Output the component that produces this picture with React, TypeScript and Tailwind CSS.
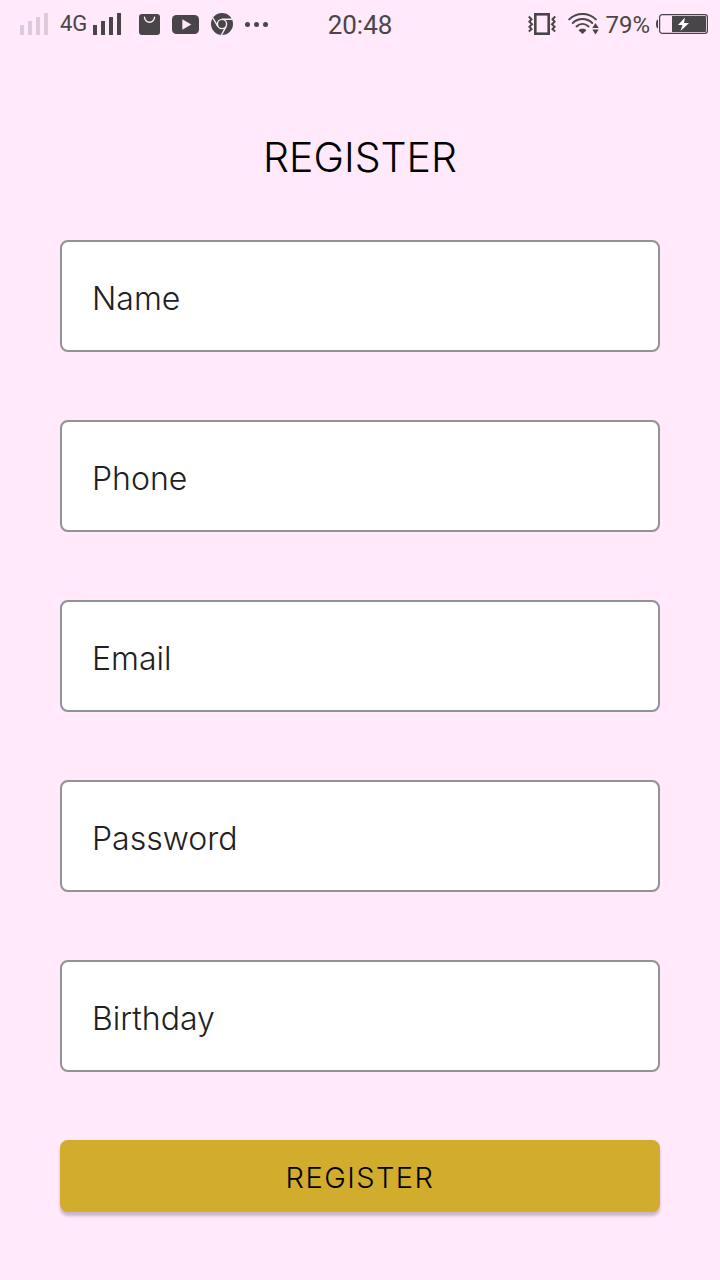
import React from "react";

type Field = { id: string; label: string; type: string };

const fields: Field[] = [
  { id: "name", label: "Name", type: "text" },
  { id: "phone", label: "Phone", type: "tel" },
  { id: "email", label: "Email", type: "email" },
  { id: "password", label: "Password", type: "password" },
  { id: "birthday", label: "Birthday", type: "text" },
];

function Signal({ className }: { className: string }) {
  return (
    <svg width="28" height="22" viewBox="0 0 28 22" fill="currentColor" className={className} aria-hidden="true">
      <path d="M0 12h4v10H0zM8 8h4v14H8zM16 4h4v18h-4zM24 0h4v22h-4z" />
    </svg>
  );
}

function BagIcon() {
  return (
    <svg width="21" height="21" viewBox="0 0 21 21" aria-hidden="true">
      <rect width="21" height="21" rx="3" fill="currentColor" />
      <path d="M5.5 3.2a5 5 0 0 0 10 0" fill="none" stroke="#ffe9fb" strokeWidth="1.4" strokeLinecap="round" />
    </svg>
  );
}

function VideoIcon() {
  return (
    <svg width="27" height="19" viewBox="0 0 27 19" aria-hidden="true">
      <rect width="27" height="19" rx="4.5" fill="currentColor" />
      <path d="M10.3 4.2v10.6l9-5.3z" fill="#ffe9fb" />
    </svg>
  );
}

function ChromeIcon() {
  return (
    <svg width="22" height="22" viewBox="0 0 22 22" aria-hidden="true">
      <circle cx="11" cy="11" r="11" fill="currentColor" />
      <g fill="none" stroke="#ffe9fb" strokeWidth="1.4">
        <circle cx="11" cy="11" r="4.6" />
        <path d="M11 6.2h10M6.8 13.4 1.9 5M15.2 13.4 10.4 22" />
      </g>
    </svg>
  );
}

function VibrateIcon() {
  return (
    <svg width="28" height="22" viewBox="0 0 28 22" fill="none" stroke="currentColor" aria-hidden="true">
      <rect x="7.3" y="1.3" width="13.4" height="19.4" strokeWidth="2.6" />
      <path
        d="M.8 3.5 3.5 6.2 1.4 8.7 4 11.2 1.4 13.7 3.5 16.2.8 18.5M27.2 3.5 24.5 6.2l2.1 2.5-2.6 2.5 2.6 2.5-2.1 2.5 2.7 2.3"
        strokeWidth="2"
      />
    </svg>
  );
}

function WifiIcon() {
  return (
    <svg width="31" height="22" viewBox="0 0 31 22" fill="none" stroke="currentColor" strokeLinecap="round" aria-hidden="true">
      <path d="M1.2 6.4C8.5-.8 20.5-.8 27.8 6.4" strokeWidth="2" />
      <path d="M4.8 10c5.6-5.2 13.8-5.2 19.4 0" strokeWidth="2" />
      <path d="M8.5 13.4c3.6-3.2 8.4-3.2 12 0" strokeWidth="2" />
      <path d="M10.5 17.2c2.2-1.8 5.8-1.800 8 0l-4 3.800z" fill="currentColor" stroke="none" />
      <path d="m27.500 10 3.200 5h-6.400zM27.500 21.500l3.200-5h-6.400z" fill="currentColor" stroke="none" />
    </svg>
  );
}

function BatteryIcon() {
  return (
    <svg width="52" height="20" viewBox="0 0 52 20" aria-hidden="true">
      <path d="M2 5.5v9C.5 14 0 12.500 0 10s.5-4 2-4.500z" fill="currentColor" />
      <rect x="3.6" y=".6" width="47.8" height="18.8" rx="2.6" fill="none" stroke="currentColor" strokeWidth="1.2" />
      <path d="M16 2h33a1 1 0 0 1 1 1v14a1 1 0 0 1-1 1H16z" fill="currentColor" />
      <path d="M29 3.500 22 11h4.500l-2 6L33 9h-5z" fill="#fff" />
    </svg>
  );
}

function StatusBar() {
  return (
    <header className="grid h-12 grid-cols-[1fr_auto_1fr] items-center px-3 font-['Roboto','Liberation_Sans',sans-serif] text-[#494649]">
      <div className="flex items-center pl-2">
        <Signal className="text-[#dccbdb]" />
        <span className="ml-3 mr-1.5 text-[22px] leading-6">4G</span>
        <Signal className="mr-4.5" />
        <div className="flex items-center gap-3">
          <BagIcon />
          <VideoIcon />
          <ChromeIcon />
          <svg width="23" height="5" viewBox="0 0 23 5" fill="currentColor" aria-hidden="true">
            <circle cx="2.5" cy="2.5" r="2.5" />
            <circle cx="11.5" cy="2.5" r="2.5" />
            <circle cx="20.5" cy="2.5" r="2.5" />
          </svg>
        </div>
      </div>
      <time className="pt-0.5 text-[26px] leading-8">20:48</time>
      <div className="flex items-center justify-end">
        <VibrateIcon />
        <span className="ml-3 mr-1.5"><WifiIcon /></span>
        <span className="mr-1.5 pt-0.5 text-2xl">79%</span>
        <BatteryIcon />
      </div>
    </header>
  );
}

export default function App() {
  return (
    <div className="min-h-screen bg-[#ffe9fb] font-['Inter','Liberation_Sans',sans-serif]">
      <StatusBar />
      <main className="px-[60px] pb-[68px] pt-[85px]">
        <h1 className="text-center text-[41px] font-light leading-[48px] text-black">REGISTER</h1>
        <form className="mt-[59px] flex flex-col gap-[68px]" onSubmit={(e) => e.preventDefault()}>
          {fields.map((f) => (
            <input
              key={f.id}
              id={f.id}
              name={f.id}
              type={f.type}
              aria-label={f.label}
              placeholder={f.label}
              className="h-28 w-full rounded-lg border-2 border-[#929292] bg-white px-[30px] pt-1 text-[32px] font-light text-[#212121] outline-none placeholder:text-[#212121] placeholder:opacity-100"
            />
          ))}
          <button
            type="submit"
            className="h-[72px] w-full cursor-pointer rounded-lg bg-[#d2ac2d] pt-1 text-[29px] font-light tracking-wider text-black shadow-[0_4px_3px_rgba(60,40,60,0.26)]"
          >
            REGISTER
          </button>
        </form>
      </main>
    </div>
  );
}
